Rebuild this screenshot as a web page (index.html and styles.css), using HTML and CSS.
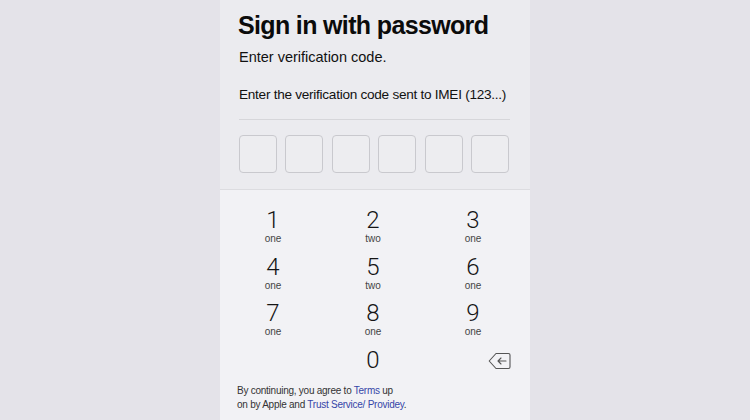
FILE: index.html
```html
<!DOCTYPE html>
<html lang="en">
<head>
  <meta charset="UTF-8" />
  <meta name="viewport" content="width=device-width, initial-scale=1.0"/>
  <title>Sign in with password</title>
  <link rel="stylesheet" href="styles.css">
</head>
<body>
  <div class="panel">
    <div class="top">
      <h1>Sign in with password</h1>
      <p class="sub">Enter verification code.</p>
      <p class="hint">Enter the verification code sent to IMEI (123...)</p>
      <div class="codes">
        <div class="code"></div>
        <div class="code"></div>
        <div class="code"></div>
        <div class="code"></div>
        <div class="code"></div>
        <div class="code"></div>
      </div>
    </div>

    <div class="bottom">
      <div class="keypad">
        <div class="key"><span class="num">1</span><span class="lbl">one</span></div>
        <div class="key"><span class="num">2</span><span class="lbl">two</span></div>
        <div class="key"><span class="num">3</span><span class="lbl">one</span></div>
        <div class="key"><span class="num">4</span><span class="lbl">one</span></div>
        <div class="key"><span class="num">5</span><span class="lbl">two</span></div>
        <div class="key"><span class="num">6</span><span class="lbl">one</span></div>
        <div class="key"><span class="num">7</span><span class="lbl">one</span></div>
        <div class="key"><span class="num">8</span><span class="lbl">one</span></div>
        <div class="key"><span class="num">9</span><span class="lbl">one</span></div>
        <div class="key"></div>
        <div class="key"><span class="num">0</span></div>
        <div class="key back">
          <svg width="23" height="18" viewBox="0 0 23 18">
            <path d="M8 1.5 H20.5 a1.5 1.5 0 0 1 1.5 1.5 V15 a1.5 1.5 0 0 1 -1.5 1.5 H8 L1.2 9 Z" fill="none" stroke="#555" stroke-width="1.1" stroke-linejoin="round"/>
            <path d="M18 9 H10 M13 6 L10 9 L13 12" fill="none" stroke="#555" stroke-width="1.1" stroke-linecap="round" stroke-linejoin="round"/>
          </svg>
        </div>
      </div>

      <p class="legal">By continuing, you agree to <a href="#">Terms</a> up<br>on by Apple and <a href="#">Trust Service/ Providey</a>.</p>
    </div>
  </div>
</body>
</html>
```

FILE: styles.css
```css
body {
  margin: 0;
  background-color: #e4e3e9;
  font-family: "Liberation Sans", Arial, sans-serif;
  color: #111;
}

.panel {
  width: 310px;
  height: 420px;
  margin: 0 auto;
  display: flex;
  flex-direction: column;
  overflow: hidden;
}

.top {
  background-color: #ebebef;
  padding: 10px 20px 0 18px;
  height: 179px;
}

h1 {
  margin: 0;
  font-size: 25px;
  letter-spacing: -0.65px;
  line-height: 30px;
  color: #0b0b0b;
}

.sub {
  margin: 8px 0 0 1px;
  font-size: 14.5px;
  line-height: 18px;
}

.hint {
  margin: 20px 0 0 1px;
  font-size: 13.6px;
  letter-spacing: -0.27px;
  line-height: 18px;
  white-space: nowrap;
  padding-bottom: 15px;
  border-bottom: 1px solid #d6d6da;
}

.codes {
  display: flex;
  justify-content: space-between;
  margin-top: 15px;
  padding: 0 1px;
}

.code {
  width: 36px;
  height: 36px;
  border: 1px solid #c9c9ce;
  border-radius: 4px;
  background-color: #ededf0;
}

.bottom {
  flex: 1;
  background-color: #f2f2f5;
  border-top: 1px solid #dcdce0;
}

.keypad {
  display: grid;
  grid-template-columns: repeat(3, 100px);
  grid-template-rows: repeat(3, 46.7px) 29px;
  padding: 17px 0 0 3px;
}

.key {
  display: flex;
  flex-direction: column;
  align-items: center;
}

.num {
  font-family: Roboto, "Liberation Sans", sans-serif;
  font-weight: 300;
  font-size: 24px;
  line-height: 26px;
  color: #151515;
}

.lbl {
  font-family: "Liberation Sans", Arial, sans-serif;
  font-size: 10px;
  line-height: 12px;
  color: #444;
}

.back {
  align-items: flex-end;
  padding: 5px 12px 0 0;
}

.legal {
  margin: 8px 0 0 17px;
  font-size: 10px;
  letter-spacing: -0.25px;
  line-height: 14px;
  color: #333;
}

.legal a {
  color: #3646a8;
  text-decoration: none;
}
```
